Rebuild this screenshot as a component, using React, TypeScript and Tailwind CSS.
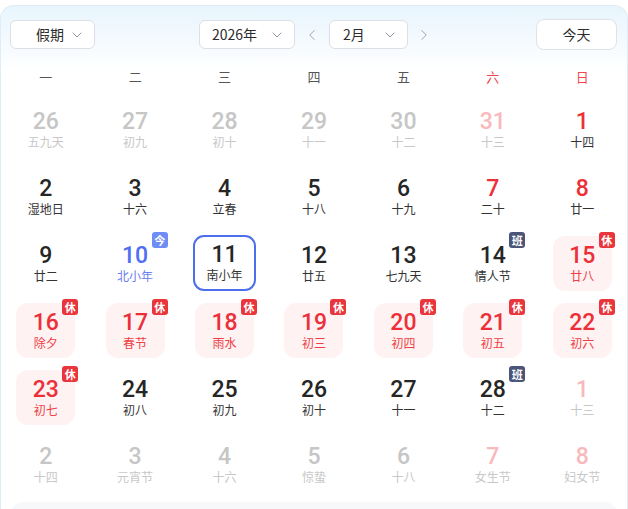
import { ChevronDown, ChevronLeft, ChevronRight } from 'lucide-react';

type Kind = 'other' | 'otherWeekend' | 'normal' | 'weekend' | 'rest' | 'today' | 'selected';

interface Day {
  n: number;
  lunar: string;
  kind: Kind;
  badge?: '休' | '班' | '今';
}

const WEEK = ['一', '二', '三', '四', '五', '六', '日'];

const DAYS: Day[] = [
  { n: 26, lunar: '五九天', kind: 'other' },
  { n: 27, lunar: '初九', kind: 'other' },
  { n: 28, lunar: '初十', kind: 'other' },
  { n: 29, lunar: '十一', kind: 'other' },
  { n: 30, lunar: '十二', kind: 'other' },
  { n: 31, lunar: '十三', kind: 'otherWeekend' },
  { n: 1, lunar: '十四', kind: 'weekend' },

  { n: 2, lunar: '湿地日', kind: 'normal' },
  { n: 3, lunar: '十六', kind: 'normal' },
  { n: 4, lunar: '立春', kind: 'normal' },
  { n: 5, lunar: '十八', kind: 'normal' },
  { n: 6, lunar: '十九', kind: 'normal' },
  { n: 7, lunar: '二十', kind: 'weekend' },
  { n: 8, lunar: '廿一', kind: 'weekend' },

  { n: 9, lunar: '廿二', kind: 'normal' },
  { n: 10, lunar: '北小年', kind: 'today', badge: '今' },
  { n: 11, lunar: '南小年', kind: 'selected' },
  { n: 12, lunar: '廿五', kind: 'normal' },
  { n: 13, lunar: '七九天', kind: 'normal' },
  { n: 14, lunar: '情人节', kind: 'normal', badge: '班' },
  { n: 15, lunar: '廿八', kind: 'rest', badge: '休' },

  { n: 16, lunar: '除夕', kind: 'rest', badge: '休' },
  { n: 17, lunar: '春节', kind: 'rest', badge: '休' },
  { n: 18, lunar: '雨水', kind: 'rest', badge: '休' },
  { n: 19, lunar: '初三', kind: 'rest', badge: '休' },
  { n: 20, lunar: '初四', kind: 'rest', badge: '休' },
  { n: 21, lunar: '初五', kind: 'rest', badge: '休' },
  { n: 22, lunar: '初六', kind: 'rest', badge: '休' },

  { n: 23, lunar: '初七', kind: 'rest', badge: '休' },
  { n: 24, lunar: '初八', kind: 'normal' },
  { n: 25, lunar: '初九', kind: 'normal' },
  { n: 26, lunar: '初十', kind: 'normal' },
  { n: 27, lunar: '十一', kind: 'normal' },
  { n: 28, lunar: '十二', kind: 'normal', badge: '班' },
  { n: 1, lunar: '十三', kind: 'otherWeekend' },

  { n: 2, lunar: '十四', kind: 'other' },
  { n: 3, lunar: '元宵节', kind: 'other' },
  { n: 4, lunar: '十六', kind: 'other' },
  { n: 5, lunar: '惊蛰', kind: 'other' },
  { n: 6, lunar: '十八', kind: 'other' },
  { n: 7, lunar: '女生节', kind: 'otherWeekend' },
  { n: 8, lunar: '妇女节', kind: 'otherWeekend' },
];

const numColor: Record<Kind, string> = {
  other: 'text-[#c6c6c6]',
  otherWeekend: 'text-[#f8b9bc]',
  normal: 'text-[#262626]',
  weekend: 'text-[#ec2f38]',
  rest: 'text-[#ec2f38]',
  today: 'text-[#4f6ef3]',
  selected: 'text-[#262626]',
};

const lunarColor: Record<Kind, string> = {
  other: 'text-[#c8c8c8]',
  otherWeekend: 'text-[#c8c8c8]',
  normal: 'text-[#333333]',
  weekend: 'text-[#333333]',
  rest: 'text-[#ee3f47]',
  today: 'text-[#6a7ef1]',
  selected: 'text-[#333333]',
};

const badgeColor = {
  休: 'bg-[#e9353c]',
  班: 'bg-[#4a5578]',
  今: 'bg-[#6f8df6]',
};

function Select({ label, width, pl }: { label: string; width: string; pl: string }) {
  return (
    <div
      className={`${width} ${pl} h-[29px] flex items-center justify-between pr-[9px] rounded-[6px] border border-[#dcdfe6] bg-white text-[14px] text-[#2b2b2b]`}
    >
      <span>{label}</span>
      <ChevronDown size={16} strokeWidth={1.3} className="text-[#7d8596]" />
    </div>
  );
}

function Cell({ d }: { d: Day }) {
  const box =
    d.kind === 'rest'
      ? 'w-[59px] h-[55px] bg-[#fff2f2] rounded-[12px]'
      : d.kind === 'selected'
        ? 'w-[63px] h-[56px] -mt-[1px] border-2 border-[#4d6fee] rounded-[11px]'
        : 'w-[59px] h-[55px]';
  return (
    <div className="flex justify-center">
      <div className={`relative flex flex-col items-center ${box}`}>
        <div className={d.kind === 'selected' ? 'h-[4px]' : 'h-[6px]'} />
        <div
          className={`text-[23px] leading-[27px] font-medium ${numColor[d.kind]}`}
          style={{ fontFamily: 'Roboto, "Noto Sans", sans-serif' }}
        >
          {d.n}
        </div>
        <div className={`text-[12px] leading-[14px] ${lunarColor[d.kind]}`}>{d.lunar}</div>
        {d.badge && (
          <div
            className={`absolute -top-[4px] ${d.kind === 'selected' ? '-right-[5px]' : '-right-[3px]'} w-[16px] h-[16px] rounded-[3px] flex items-center justify-center text-[11px] leading-none font-bold text-white ${badgeColor[d.badge]}`}
          >
            {d.badge}
          </div>
        )}
      </div>
    </div>
  );
}

export default function App() {
  return (
    <div
      className="w-[628px] h-[509px] overflow-hidden bg-white pt-[5px]"
      style={{ fontFamily: '"Noto Sans CJK SC", "Noto Sans", sans-serif' }}
    >
      <div className="h-full rounded-t-[14px] border-t border-x border-[#e0ecf6] bg-[linear-gradient(to_bottom,#e8f5fd_0px,#f4fafe_35px,#ffffff_65px)]">
        {/* header */}
        <div className="flex items-center h-[31px] mt-[13px] pl-[9px] pr-[10px]">
          <Select label="假期" width="w-[85px]" pl="pl-[25px]" />
          <div className="ml-[104px] flex items-center">
            <Select label="2026年" width="w-[96px]" pl="pl-[12px]" />
            <div className="w-[34px] flex justify-center">
              <ChevronLeft size={18} strokeWidth={1.3} className="text-[#9aa1ad]" />
            </div>
            <Select label="2月" width="w-[79px]" pl="pl-[13px]" />
            <div className="w-[32px] flex justify-center">
              <ChevronRight size={18} strokeWidth={1.3} className="text-[#9aa1ad]" />
            </div>
          </div>
          <div className="ml-auto w-[81px] h-[31px] rounded-[8px] border border-[#dfe2e8] bg-white flex items-center justify-center text-[14px] text-[#2b2b2b]">
            今天
          </div>
        </div>

        {/* week header */}
        <div className="grid grid-cols-7 mt-[17px] h-[20px] items-center">
          {WEEK.map((w, i) => (
            <div
              key={w}
              className={`text-center text-[13px] ${i >= 5 ? 'text-[#f0474e]' : 'text-[#555555]'}`}
            >
              {w}
            </div>
          ))}
        </div>

        {/* days */}
        <div className="grid grid-cols-7 gap-y-[12px] mt-[15px]">
          {DAYS.map((d, i) => (
            <Cell key={i} d={d} />
          ))}
        </div>

        <div className="mx-[10px] mt-[10px] h-[40px] rounded-[12px] bg-[#f7f8fa]" />
      </div>
    </div>
  );
}
